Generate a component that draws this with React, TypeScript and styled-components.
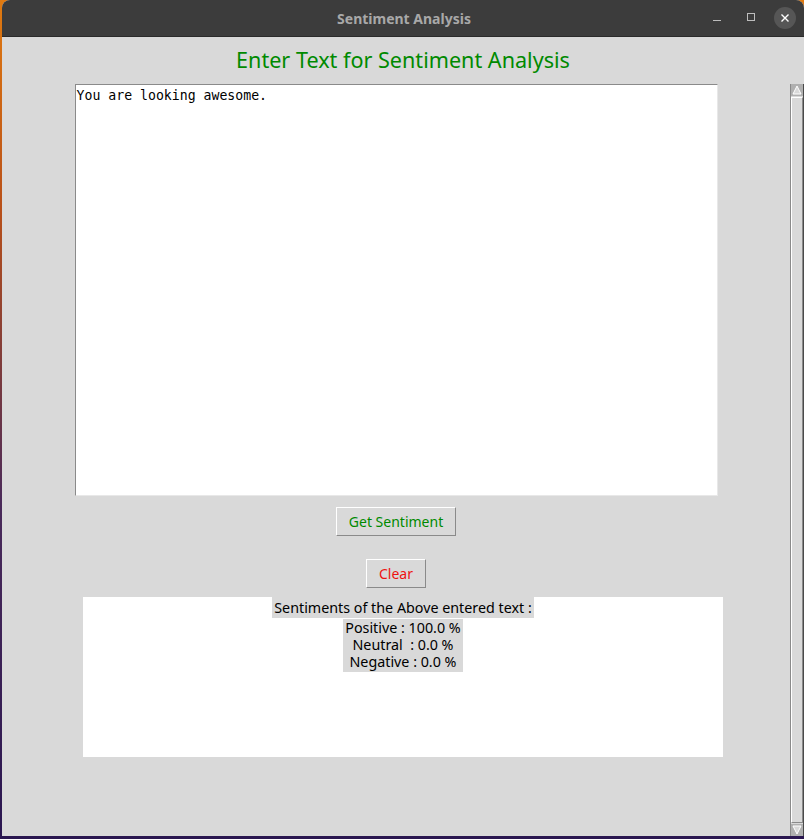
import React from "react";
import styled, { createGlobalStyle } from "styled-components";

const Global = createGlobalStyle`
  html, body { margin: 0; padding: 0; }
  body {
    width: 804px; height: 839px; overflow: hidden;
    background: linear-gradient(180deg, #e07a10 0%, #b8501a 25%, #4a2a5a 60%, #2a1650 100%);
    font-family: "DejaVu Sans", "Noto Sans", sans-serif;
  }
`;

const Win = styled.div`
  margin-left: 2px;
  width: 802px;
  height: 836px;
  display: flex;
  flex-direction: column;
  border-radius: 8px 8px 0 0;
  overflow: hidden;
  background: #d9d9d9;
`;

const TitleBar = styled.div`
  height: 36px;
  background: #3c3c3c;
  border-bottom: 1px solid #2a2a2a;
  display: flex;
  align-items: center;
  justify-content: center;
  position: relative;
  flex-shrink: 0;
`;

const Title = styled.div`
  color: #a8a8a8;
  font-family: "Noto Sans", "DejaVu Sans", sans-serif;
  font-weight: bold;
  font-size: 14px;
  margin-left: 2px;
`;

const Controls = styled.div`
  position: absolute;
  right: 2px;
  top: 0;
  height: 36px;
  display: flex;
  align-items: center;
`;

const CtlBtn = styled.div`
  width: 34px;
  height: 34px;
  display: flex;
  align-items: center;
  justify-content: center;
`;

const CloseCircle = styled.div`
  width: 22px;
  height: 22px;
  border-radius: 50%;
  background: #565656;
  display: flex;
  align-items: center;
  justify-content: center;
`;

const Body = styled.div`
  flex: 1;
  display: flex;
  flex-direction: row;
  min-height: 0;
`;

const Main = styled.div`
  flex: 1;
  display: flex;
  flex-direction: column;
  align-items: center;
`;

const Heading = styled.div`
  color: #008a00;
  font-size: 21.6px;
  font-family: "Noto Sans", "DejaVu Sans", sans-serif;
  margin-top: 9px;
  margin-left: 14px;
  height: 28px;
  line-height: 28px;
`;

const TextArea = styled.div`
  margin-top: 10px;
  width: 643px;
  height: 412px;
  background: #ffffff;
  border-top: 1px solid #8a8a8a;
  border-left: 1px solid #8a8a8a;
  border-right: 1px solid #e8e8e8;
  border-bottom: 1px solid #e8e8e8;
  font-family: "DejaVu Sans Mono", "Liberation Mono", monospace;
  font-size: 13.2px;
  color: #000;
  padding: 2px 1px;
  box-sizing: border-box;
  line-height: 17px;
`;

const TkButton = styled.div<{ $color: string; $w: number; $mt: number }>`
  margin-top: ${(p) => p.$mt}px;
  width: ${(p) => p.$w}px;
  height: 29px;
  box-sizing: border-box;
  border-top: 1px solid #ffffff;
  border-left: 1px solid #ffffff;
  border-right: 1px solid #8a8a8a;
  border-bottom: 1px solid #8a8a8a;
  display: flex;
  align-items: center;
  justify-content: center;
  color: ${(p) => p.$color};
  font-size: 14px;
  font-family: "Noto Sans", "DejaVu Sans", sans-serif;
`;

const ResultPanel = styled.div`
  margin-top: 9px;
  margin-left: 14px;
  width: 640px;
  height: 160px;
  background: #ffffff;
  display: flex;
  flex-direction: column;
  align-items: center;
`;

const Label = styled.div`
  background: #d9d9d9;
  color: #000;
  font-size: 14.3px;
  font-family: "Noto Sans", "DejaVu Sans", sans-serif;
  padding: 0 2px;
  height: 21px;
  line-height: 21px;
  text-align: center;
`;

const Result = styled(Label)`
  margin-top: 1px;
  height: auto;
  line-height: 17px;
  padding: 0 2px 2px;
  white-space: pre;
`;

const Scrollbar = styled.div`
  width: 14px;
  margin-top: 47px;
  display: flex;
  flex-direction: column;
  background: #d9d9d9;
  border-left: 1px solid #8a8a8a;
  border-right: 1px solid #4a4a4a;
  box-sizing: border-box;
`;

const Arrow = styled.div`
  height: 12px;
  display: flex;
  align-items: center;
  justify-content: center;
  background: #b0b0b0;
  flex-shrink: 0;
`;

const Thumb = styled.div`
  flex: 1;
  margin: 1px 0;
  border-top: 1px solid #ffffff;
  border-left: 1px solid #ffffff;
  border-right: 1px solid #8a8a8a;
  border-bottom: 1px solid #8a8a8a;
  background: #d9d9d9;
`;

export default function App() {
  return (
    <>
      <Global />
      <Win>
        <TitleBar>
          <Title>Sentiment Analysis</Title>
          <Controls>
            <CtlBtn>
              <svg width="12" height="12" viewBox="0 0 12 12">
                <rect x="2" y="8" width="8" height="1" fill="#bdbdbd" />
              </svg>
            </CtlBtn>
            <CtlBtn>
              <svg width="12" height="12" viewBox="0 0 12 12">
                <rect x="2.5" y="1.5" width="7" height="7" fill="none" stroke="#bdbdbd" strokeWidth="1" />
              </svg>
            </CtlBtn>
            <CtlBtn>
              <CloseCircle>
                <svg width="10" height="10" viewBox="0 0 10 10">
                  <path d="M1.5 1.5 L8.5 8.5 M8.5 1.5 L1.5 8.5" stroke="#ffffff" strokeWidth="1.4" />
                </svg>
              </CloseCircle>
            </CtlBtn>
          </Controls>
        </TitleBar>
        <Body>
          <Main>
            <Heading>Enter Text for Sentiment Analysis</Heading>
            <TextArea>You are looking awesome.</TextArea>
            <TkButton $color="#008a00" $w={120} $mt={11}>Get Sentiment</TkButton>
            <TkButton $color="#ee1111" $w={60} $mt={23}>Clear</TkButton>
            <ResultPanel>
              <Label>Sentiments of the Above entered text :</Label>
              <Result>{"Positive : 100.0 %\nNeutral  : 0.0 %\nNegative : 0.0 %"}</Result>
            </ResultPanel>
          </Main>
          <Scrollbar>
            <Arrow>
              <svg width="10" height="10" viewBox="0 0 10 10">
                <path d="M5 1 L9 9 L1 9 Z" fill="#d9d9d9" stroke="#ffffff" strokeWidth="1" />
              </svg>
            </Arrow>
            <Thumb />
            <Arrow>
              <svg width="10" height="10" viewBox="0 0 10 10">
                <path d="M1 1 L9 1 L5 9 Z" fill="#d9d9d9" stroke="#ffffff" strokeWidth="1" />
              </svg>
            </Arrow>
          </Scrollbar>
        </Body>
      </Win>
    </>
  );
}
